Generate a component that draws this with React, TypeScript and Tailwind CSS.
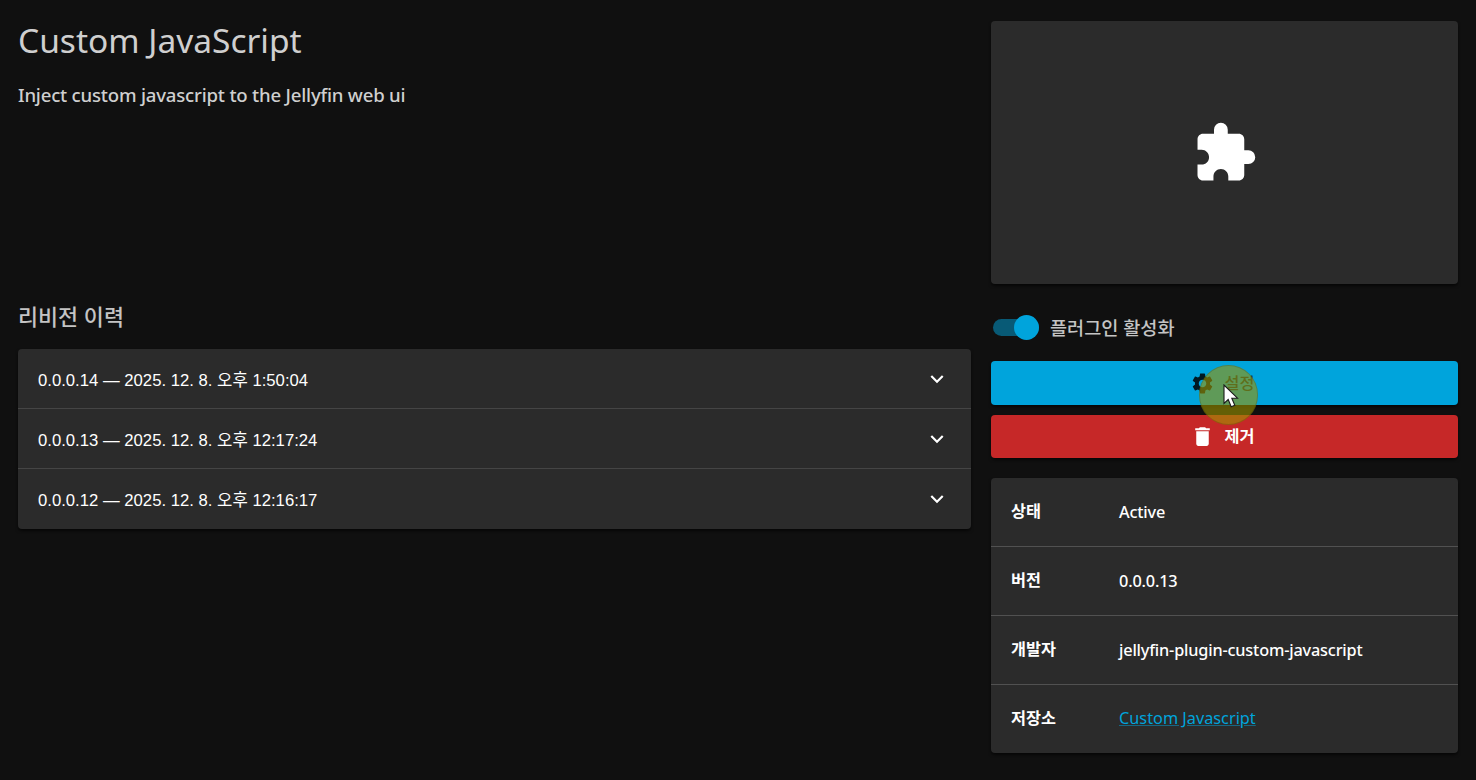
import { useState } from "react";
import { MdDelete, MdExpandMore, MdExtension, MdSettings } from "react-icons/md";

interface Revision {
    version: string
    date: string
}

const revisions: Revision[] = [
    { version: '0.0.0.14', date: '2025. 12. 8. 오후 1:50:04' },
    { version: '0.0.0.13', date: '2025. 12. 8. 오후 12:17:24' },
    { version: '0.0.0.12', date: '2025. 12. 8. 오후 12:16:17' },
];

function DetailRow({ label, children }: { label: string, children: React.ReactNode }) {
    return (
        <div className="flex h-[69px] items-center border-b border-[#515151] px-5 text-[16.3px] last:h-[68px] last:border-b-0">
            <div className="w-[108px] pb-0.5 font-bold">{label}</div>
            <div className="font-medium tracking-[-0.18px]">{children}</div>
        </div>
    )
}

function Pointer() {
    return (
        <div className="pointer-events-none absolute left-[1199px] top-[365px] h-[60px] w-[59px] rounded-full border border-black/15 bg-[#9f9400]/60">
            <svg className="absolute left-[23px] top-[18px]" width="17" height="26" viewBox="0 0 17 26">
                <path d="M1 1v18.5l4.2-4 3 7.2 3.6-1.5-3-7h5.7z" fill="#fff" stroke="#1a1a1a" strokeWidth="1.1" />
            </svg>
        </div>
    )
}

export default function App() {
    const [enabled, setEnabled] = useState<boolean>(true);

    return (
        <div className="relative flex h-[780px] w-[1476px] gap-5 overflow-hidden bg-[#101010] px-[18px] pt-[21px] font-['Noto_Sans','Noto_Sans_CJK_KR',sans-serif] text-white">
            <main className="w-[953px]">
                <div className="h-[280px] text-[#cfcfcf]">
                    <h1 className="text-[33.5px] leading-[38px]">Custom JavaScript</h1>
                    <p className="mt-[22px] text-[18.6px] font-medium leading-[28px] tracking-[-0.2px]">Inject custom javascript to the Jellyfin web ui</p>
                </div>
                <h2 className="text-[21.8px] font-medium leading-[32px] text-[#c4c4c4]">리비전 이력</h2>
                <div className="mt-4 overflow-hidden rounded-[4px] bg-[#2b2b2b] shadow-[0_2px_3px_rgba(0,0,0,0.6)]">
                    {revisions.map((rev) => (
                        <button key={rev.version} type="button"
                            className="flex h-[60px] w-full items-center justify-between border-b border-[#454545] px-5 text-left font-['Liberation_Sans','Noto_Sans_CJK_KR',sans-serif] text-[16.7px] last:border-b-0">
                            <span className="pt-1">{rev.version} — {rev.date}</span>
                            <MdExpandMore className="mr-px size-[26px]" />
                        </button>
                    ))}
                </div>
            </main>

            <aside className="w-[467px]">
                <div className="flex h-[263px] items-center justify-center rounded-[4px] bg-[#2b2b2b] shadow-[0_2px_3px_rgba(0,0,0,0.6)]">
                    <MdExtension className="size-[66px]" />
                </div>

                <div className="mt-[31px] flex h-[25px] items-center gap-[11px] pl-0.5">
                    <button type="button" role="switch" aria-checked={enabled} onClick={() => setEnabled(!enabled)}
                        className="flex h-[17px] w-[46px] items-center justify-end rounded-full bg-[#085a76]">
                        <span className="size-[25px] shrink-0 rounded-full bg-[#00a4dc]" />
                    </button>
                    <span className="text-[18.6px] font-medium text-[#c4c4c4]">플러그인 활성화</span>
                </div>

                <div className="mt-[21px] flex flex-col gap-2.5 text-[16.3px] font-bold">
                    <button type="button"
                        className="flex h-11 items-center justify-center gap-2.5 rounded-[4px] bg-[#00a4dc] pr-[5px] text-[#001922] shadow-[0_2px_3px_rgba(0,0,0,0.6)]">
                        <MdSettings className="size-[25px]" />
                        <span className="font-medium text-[#00364a]">설정</span>
                    </button>
                    <button type="button"
                        className="flex h-[43px] items-center justify-center gap-2.5 rounded-[4px] bg-[#c62828] pr-[5px] shadow-[0_2px_3px_rgba(0,0,0,0.6)]">
                        <MdDelete className="size-[25px]" />
                        <span className="pb-px">제거</span>
                    </button>
                </div>

                <div className="mt-5 rounded-[4px] bg-[#2b2b2b] shadow-[0_2px_3px_rgba(0,0,0,0.6)]">
                    <DetailRow label="상태">Active</DetailRow>
                    <DetailRow label="버전">0.0.0.13</DetailRow>
                    <DetailRow label="개발자">jellyfin-plugin-custom-javascript</DetailRow>
                    <DetailRow label="저장소">
                        <a href="#" className="block pb-0.5 font-normal tracking-[0px] text-[#00a4dc] underline decoration-[#00a4dc]/50">Custom Javascript</a>
                    </DetailRow>
                </div>
            </aside>

            <Pointer />
        </div>
    )
}
